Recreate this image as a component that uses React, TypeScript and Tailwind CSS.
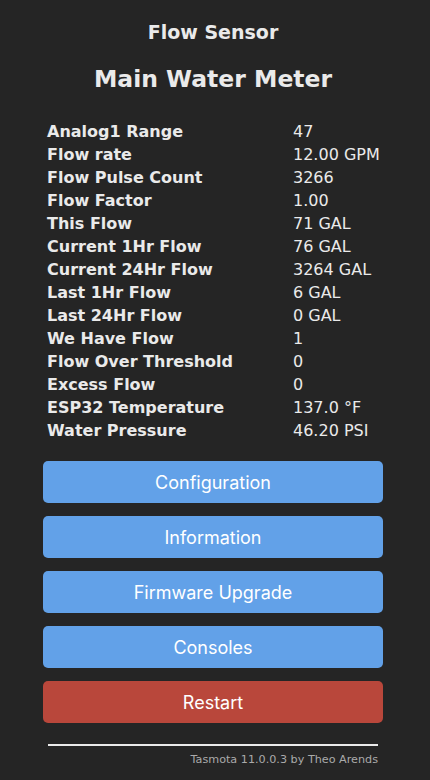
import React from "react";

const rows: [string, string][] = [
  ["Analog1 Range", "47"],
  ["Flow rate", "12.00 GPM"],
  ["Flow Pulse Count", "3266"],
  ["Flow Factor", "1.00"],
  ["This Flow", "71 GAL"],
  ["Current 1Hr Flow", "76 GAL"],
  ["Current 24Hr Flow", "3264 GAL"],
  ["Last 1Hr Flow", "6 GAL"],
  ["Last 24Hr Flow", "0 GAL"],
  ["We Have Flow", "1"],
  ["Flow Over Threshold", "0"],
  ["Excess Flow", "0"],
  ["ESP32 Temperature", "137.0 °F"],
  ["Water Pressure", "46.20 PSI"],
];

const buttons = ["Configuration", "Information", "Firmware Upgrade", "Consoles"];

export default function App() {
  return (
    <div
      className="min-h-[780px] w-full bg-[#252525] text-[#eaeaea] flex justify-center pr-[4px]"
      style={{ fontFamily: '"DejaVu Sans", Verdana, sans-serif' }}
    >
      <div className="w-[340px] flex flex-col pt-[22px]">
        <div className="text-center font-bold text-[19px] leading-[20px]">Flow Sensor</div>
        <div className="text-center font-bold text-[23.5px] leading-[26px] mt-[24px]">Main Water Meter</div>
        <div className="mt-[28px] pl-[4px] flex flex-col">
          {rows.map(([k, v]) => (
            <div key={k} className="flex h-[23px] items-center text-[16px] whitespace-nowrap">
              <div className="w-[246px] shrink-0 font-bold">{k}</div>
              <div className="whitespace-nowrap">{v}</div>
            </div>
          ))}
        </div>
        <div
          className="mt-[19px] flex flex-col gap-[13px]"
          style={{ fontFamily: 'Inter, "Liberation Sans", sans-serif' }}
        >
          {buttons.map((b) => (
            <div
              key={b}
              className="h-[42px] rounded-[5px] bg-[#62a1e8] text-white text-[18px] flex items-center justify-center"
            >
              {b}
            </div>
          ))}
          <div className="h-[42px] rounded-[5px] bg-[#b9473b] text-white text-[18px] flex items-center justify-center">
            Restart
          </div>
        </div>
        <div className="mx-[5px] mt-[21px] h-[2px] bg-[#eaeaea]" />
        <div className="mx-[5px] mt-[6px] text-right text-[11.2px] text-[#aaaaaa]">Tasmota 11.0.0.3 by Theo Arends</div>
      </div>
    </div>
  );
}
